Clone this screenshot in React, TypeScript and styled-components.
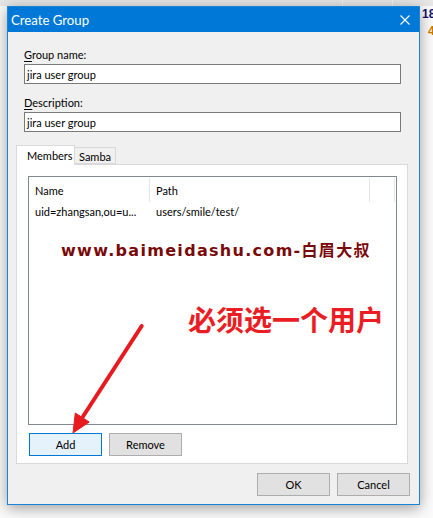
import React from "react";
import styled, { createGlobalStyle } from "styled-components";

const GlobalStyle = createGlobalStyle`
  html, body { margin: 0; padding: 0; background: #fbfbfb; }
  body {
    font-family: "Segoe UI", Lato, "Liberation Sans", sans-serif;
    font-size: 11px;
    color: #000;
    overflow: hidden;
  }
  * { box-sizing: border-box; }
`;

const Page = styled.div`
  width: 433px;
  height: 518px;
  display: grid;
  grid-template-columns: 7px 413px 1fr;
  grid-template-rows: 6px auto 1fr;
  overflow: hidden;
`;

const TopStrip = styled.div`
  grid-column: 1 / -1;
  grid-row: 1;
  display: flex;
  background: #e7e7e7;
`;

const StripSegment = styled.div<{ $w?: number }>`
  flex: ${(p) => (p.$w ? `0 0 ${p.$w}px` : "1 1 auto")};
  border-right: 1px solid #f4f4f4;
`;

const SideColumn = styled.div`
  grid-column: 3;
  grid-row: 2;
  display: flex;
  flex-direction: column;
  padding: 1px 0 0 2px;
  font-family: "Liberation Sans", Arial, sans-serif;
  font-weight: bold;
  font-size: 12px;
  line-height: 14px;
  white-space: nowrap;
`;

const SideNumber = styled.span<{ $color: string; $indent: number; $gap: number }>`
  color: ${(p) => p.$color};
  padding-left: ${(p) => p.$indent}px;
  margin-top: ${(p) => p.$gap}px;
`;

const Window = styled.div`
  grid-column: 2;
  grid-row: 2;
  display: flex;
  flex-direction: column;
  border: 1px solid #1a84d8;
  background: #f0f0f0;
  box-shadow: 0 3px 14px rgba(0, 0, 0, 0.38);
  position: relative;
  z-index: 1;
`;

const TitleBar = styled.div`
  height: 25px;
  background: #0078d7;
  display: flex;
  align-items: center;
  justify-content: space-between;
  padding: 0 9px 0 3px;
  color: #fff;
  font-size: 13.2px;
`;

const Title = styled.span`
  line-height: 16px;
`;

const CloseIcon = styled.svg`
  width: 10px;
  height: 10px;
  display: block;
`;

const Body = styled.div`
  display: flex;
  flex-direction: column;
  padding: 15px 9px 8px 8px;
`;

const Fields = styled.div`
  display: flex;
  flex-direction: column;
  gap: 11px;
  padding: 0 9px 0 8px;
`;

const Field = styled.div`
  display: flex;
  flex-direction: column;
`;

const Label = styled.label`
  line-height: 15px;
  margin-bottom: 2px;
`;

const Mnemonic = styled.span`
  text-decoration: underline;
  text-underline-offset: 2px;
`;

const TextInput = styled.div`
  height: 20px;
  border: 1px solid #7a7a7a;
  background: #fff;
  padding-left: 2px;
  display: flex;
  align-items: center;
  line-height: 15px;
`;

const TabStrip = styled.div`
  margin-top: 13px;
  height: 19px;
  display: flex;
  align-items: flex-end;
`;

const Tab = styled.div<{ $active?: boolean; $w: number; $pad: number }>`
  width: ${(p) => p.$w}px;
  height: ${(p) => (p.$active ? 20 : 17)}px;
  margin-bottom: ${(p) => (p.$active ? -1 : 0)}px;
  padding: ${(p) => (p.$active ? "0 0 1px" : "1px 0 0")} ${(p) => p.$pad}px;
  background: ${(p) => (p.$active ? "#fff" : "#f0f0f0")};
  border: 1px solid #d9d9d9;
  border-bottom: ${(p) => (p.$active ? "none" : "1px solid #d9d9d9")};
  border-left-width: ${(p) => (p.$active ? 1 : 0)}px;
  display: flex;
  align-items: center;
  position: relative;
  z-index: 1;
`;

const Panel = styled.div`
  margin-right: 2px;
  height: 300px;
  border: 1px solid #d9d9d9;
  background: #fff;
  display: flex;
  flex-direction: column;
  padding: 11px 10px 7px 11px;
  position: relative;
`;

const ListView = styled.div`
  height: 249px;
  border: 1px solid #828790;
  background: #fff;
  display: flex;
  flex-direction: column;
  position: relative;
`;

const Row = styled.div<{ $h: number }>`
  display: flex;
  height: ${(p) => p.$h}px;
  align-items: stretch;
`;

const HeaderCell = styled.div<{ $w?: number }>`
  flex: ${(p) => (p.$w ? `0 0 ${p.$w}px` : "1 1 auto")};
  border-right: 1px solid #e5e5e5;
  margin: 1px 0 0;
  padding-left: 6px;
  display: flex;
  align-items: center;
  &:last-child { border-right: 1px solid #e5e5e5; margin-right: 1px; }
`;

const Cell = styled.div<{ $w: number }>`
  flex: 0 0 ${(p) => p.$w}px;
  padding-left: 6px;
  display: flex;
  align-items: center;
  white-space: nowrap;
  overflow: hidden;
`;

const Watermark = styled.div`
  position: absolute;
  left: 32px;
  top: 64px;
  font-family: "DejaVu Sans", "Noto Sans CJK SC", sans-serif;
  font-weight: bold;
  font-size: 16px;
  line-height: 20px;
  letter-spacing: 1.3px;
  color: #7a0a0a;
  white-space: nowrap;
`;

const Note = styled.div`
  position: absolute;
  left: 159px;
  top: 128px;
  font-family: "Noto Sans CJK SC", sans-serif;
  font-weight: bold;
  font-size: 28px;
  line-height: 28px;
  color: #ea1d25;
  white-space: nowrap;
`;

const Arrow = styled.svg`
  position: absolute;
  left: 0;
  top: 0;
  width: 150px;
  height: 280px;
  pointer-events: none;
  overflow: visible;
`;

const ButtonRow = styled.div<{ $end?: boolean }>`
  display: flex;
  gap: 7px;
  justify-content: ${(p) => (p.$end ? "flex-end" : "flex-start")};
  margin-top: ${(p) => (p.$end ? 9 : 8)}px;
  padding-left: ${(p) => (p.$end ? 0 : 1)}px;
`;

const Button = styled.div<{ $primary?: boolean }>`
  width: 73px;
  height: 23px;
  border: 1px solid ${(p) => (p.$primary ? "#0078d7" : "#adadad")};
  background: ${(p) => (p.$primary ? "#e5f1fb" : "#e1e1e1")};
  display: flex;
  align-items: center;
  justify-content: center;
  line-height: 15px;
`;

export default function App() {
  return (
    <>
      <GlobalStyle />
      <Page>
        <TopStrip>
          <StripSegment $w={343} />
          <StripSegment $w={50} />
          <StripSegment />
        </TopStrip>
        <Window>
          <TitleBar>
            <Title>Create Group</Title>
            <CloseIcon viewBox="0 0 10 10">
              <path d="M0.5 0.5 L9.5 9.5 M9.5 0.5 L0.5 9.5" stroke="#fff" strokeWidth="1.1" fill="none" />
            </CloseIcon>
          </TitleBar>
          <Body>
            <Fields>
              <Field>
                <Label>
                  <Mnemonic>G</Mnemonic>roup name:
                </Label>
                <TextInput>jira user group</TextInput>
              </Field>
              <Field>
                <Label>
                  <Mnemonic>D</Mnemonic>escription:
                </Label>
                <TextInput>jira user group</TextInput>
              </Field>
            </Fields>
            <TabStrip>
              <Tab $active $w={59} $pad={10}>Members</Tab>
              <Tab $w={41} $pad={4}>Samba</Tab>
            </TabStrip>
            <Panel>
              <ListView>
                <Row $h={25}>
                  <HeaderCell $w={121}>Name</HeaderCell>
                  <HeaderCell $w={220}>Path</HeaderCell>
                  <HeaderCell />
                </Row>
                <Row $h={18}>
                  <Cell $w={121}>uid=zhangsan,ou=u...</Cell>
                  <Cell $w={220}>users/smile/test/</Cell>
                </Row>
                <Watermark>www.baimeidashu.com-白眉大叔</Watermark>
                <Note>必须选一个用户</Note>
              </ListView>
              <ButtonRow>
                <Button $primary>Add</Button>
                <Button>Remove</Button>
              </ButtonRow>
              <Arrow viewBox="0 0 150 280">
                <line x1="124.7" y1="161" x2="66" y2="251.5" stroke="#e8191f" strokeWidth="4" strokeLinecap="round" />
                <polygon points="56,268 58.3,248 72.2,257" fill="#e8191f" stroke="#e8191f" strokeWidth="1" strokeLinejoin="round" />
              </Arrow>
            </Panel>
            <ButtonRow $end>
              <Button>OK</Button>
              <Button>Cancel</Button>
            </ButtonRow>
          </Body>
        </Window>
        <SideColumn>
          <SideNumber $color="#12126e" $indent={0} $gap={0}>18</SideNumber>
          <SideNumber $color="#c97a00" $indent={6} $gap={3}>4</SideNumber>
        </SideColumn>
      </Page>
    </>
  );
}
